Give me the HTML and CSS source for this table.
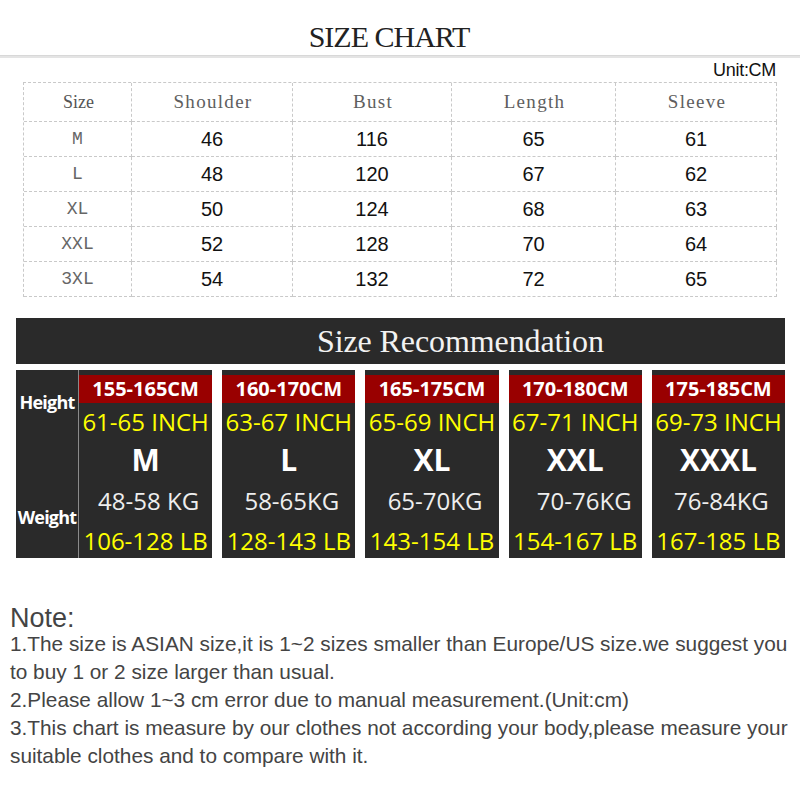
FILE: index.html
```html
<!DOCTYPE html>
<html>
<head>
<meta charset="utf-8">
<link rel="stylesheet" href="styles.css">
</head>
<body>
<div class="page">
  <h1 class="title">SIZE CHART</h1>
  <div class="rule"></div>
  <div class="unit">Unit:CM</div>
  <div class="chart">
    <div class="cell head head-size">Size</div>
    <div class="cell head">Shoulder</div>
    <div class="cell head">Bust</div>
    <div class="cell head">Length</div>
    <div class="cell head">Sleeve</div>

    <div class="cell size">M</div>
    <div class="cell num">46</div>
    <div class="cell num">116</div>
    <div class="cell num">65</div>
    <div class="cell num">61</div>

    <div class="cell size">L</div>
    <div class="cell num">48</div>
    <div class="cell num">120</div>
    <div class="cell num">67</div>
    <div class="cell num">62</div>

    <div class="cell size">XL</div>
    <div class="cell num">50</div>
    <div class="cell num">124</div>
    <div class="cell num">68</div>
    <div class="cell num">63</div>

    <div class="cell size">XXL</div>
    <div class="cell num">52</div>
    <div class="cell num">128</div>
    <div class="cell num">70</div>
    <div class="cell num">64</div>

    <div class="cell size">3XL</div>
    <div class="cell num">54</div>
    <div class="cell num">132</div>
    <div class="cell num">72</div>
    <div class="cell num">65</div>
  </div>

  <section class="rec">
    <div class="rec-band">Size Recommendation</div>
    <div class="rec-row">
      <div class="rec-labels">
        <div class="lbl lbl-h">Height</div>
        <div class="lbl lbl-w">Weight</div>
      </div>
      <div class="card">
        <div class="cm">155-165CM</div>
        <div class="inch">61-65 INCH</div>
        <div class="sz">M</div>
        <div class="kg">48-58 KG</div>
        <div class="lb">106-128 LB</div>
      </div>
      <div class="card">
        <div class="cm">160-170CM</div>
        <div class="inch">63-67 INCH</div>
        <div class="sz">L</div>
        <div class="kg">58-65KG</div>
        <div class="lb">128-143 LB</div>
      </div>
      <div class="card">
        <div class="cm">165-175CM</div>
        <div class="inch">65-69 INCH</div>
        <div class="sz">XL</div>
        <div class="kg">65-70KG</div>
        <div class="lb">143-154 LB</div>
      </div>
      <div class="card">
        <div class="cm">170-180CM</div>
        <div class="inch">67-71 INCH</div>
        <div class="sz">XXL</div>
        <div class="kg kg-wide">70-76KG</div>
        <div class="lb">154-167 LB</div>
      </div>
      <div class="card">
        <div class="cm">175-185CM</div>
        <div class="inch">69-73 INCH</div>
        <div class="sz">XXXL</div>
        <div class="kg">76-84KG</div>
        <div class="lb">167-185 LB</div>
      </div>
    </div>
  </section>

  <section class="notes">
    <div class="note-title">Note:</div>
    <p class="note">1.The size is ASIAN size,it is 1~2 sizes smaller than Europe/US size.we suggest you to buy 1 or 2 size larger than usual.</p>
    <p class="note">2.Please allow 1~3 cm error due to manual measurement.(Unit:cm)</p>
    <p class="note">3.This chart is measure by our clothes not according your body,please measure your suitable clothes and to compare with it.</p>
  </section>
</div>
</body>
</html>
```

FILE: styles.css
```css
* {
  box-sizing: border-box;
}

html, body {
  margin: 0;
  padding: 0;
  background: #ffffff;
}

.page {
  width: 800px;
  height: 800px;
  overflow: hidden;
  font-family: "Liberation Sans", Arial, sans-serif;
}

.title {
  margin: 0;
  padding: 22px 22px 0 0;
  font-family: "Liberation Serif", "Times New Roman", serif;
  font-weight: normal;
  font-size: 30px;
  line-height: 30px;
  letter-spacing: -1px;
  color: #222;
  text-align: center;
}

.rule {
  margin-top: 3px;
  height: 3px;
  background: #e4e4e4;
  border-top: 1px solid #d8d8d8;
}

.unit {
  margin-top: 2px;
  padding-right: 24px;
  text-align: right;
  font-size: 18px;
  line-height: 20px;
  letter-spacing: -0.3px;
  color: #111;
}

.chart {
  margin: 2px 0 0 23px;
  width: 754px;
  display: grid;
  grid-template-columns: 108px 161px 159px 164px 161px;
  grid-template-rows: 39px repeat(5, 35px);
  border-top: 1px dashed #c9c9c9;
  border-left: 1px dashed #c9c9c9;
}

.cell {
  display: flex;
  align-items: center;
  justify-content: center;
  border-right: 1px dashed #c9c9c9;
  border-bottom: 1px dashed #c9c9c9;
}

.head {
  font-family: "Liberation Serif", "Times New Roman", serif;
  font-size: 19px;
  letter-spacing: 1.3px;
  color: #5e5e5e;
  padding-left: 2px;
}

.head-size {
  font-size: 18px;
  letter-spacing: 0;
  color: #555;
}

.size {
  font-family: "Liberation Mono", "Courier New", monospace;
  font-size: 18px;
  color: #666;
}

.num {
  font-size: 20px;
  color: #111;
}

.rec {
  margin: 21px 15px 0 16px;
}

.rec-band {
  height: 46px;
  background: #2a2a2a;
  color: #f2f2f2;
  font-family: "Liberation Serif", "Times New Roman", serif;
  font-size: 32px;
  line-height: 46px;
  padding-left: 301px;
  letter-spacing: -0.1px;
}

.rec-row {
  margin-top: 6px;
  display: flex;
  gap: 10px;
  height: 188px;
}

.rec-labels {
  width: 63px;
  background: #2a2a2a;
  border-right: 1px solid #8a8a8a;
  margin-right: -10px;
  padding-top: 20px;
  color: #fff;
  font-family: "Open Sans", sans-serif;
  font-weight: 700;
  font-size: 18px;
  letter-spacing: -0.8px;
  text-align: center;
}

.lbl {
  line-height: 24px;
}

.lbl-w {
  margin-top: 91px;
}

.card {
  flex: 1;
  background: #2a2a2a;
  padding-top: 5px;
  font-family: "Open Sans", sans-serif;
  text-align: center;
  white-space: nowrap;
}

.cm {
  height: 28px;
  line-height: 28px;
  background: #990000;
  color: #fff;
  font-weight: 700;
  font-size: 20px;
}

.inch {
  height: 38px;
  line-height: 38px;
  color: #ffff00;
  font-size: 24px;
}

.sz {
  height: 38px;
  line-height: 38px;
  color: #fff;
  font-weight: 700;
  font-size: 30px;
}

.kg {
  height: 44px;
  line-height: 44px;
  color: #eeeeee;
  font-size: 24px;
  padding-left: 6px;
}

.kg-wide {
  padding-left: 18px;
}

.lb {
  height: 35px;
  line-height: 35px;
  color: #ffff00;
  font-size: 24px;
}

.notes {
  margin-top: 48px;
  padding-left: 10px;
  width: 792px;
  color: #444;
}

.note-title {
  font-size: 27px;
  line-height: 24px;
}

.note {
  margin: 0;
  font-size: 20.8px;
  line-height: 28px;
}
```
